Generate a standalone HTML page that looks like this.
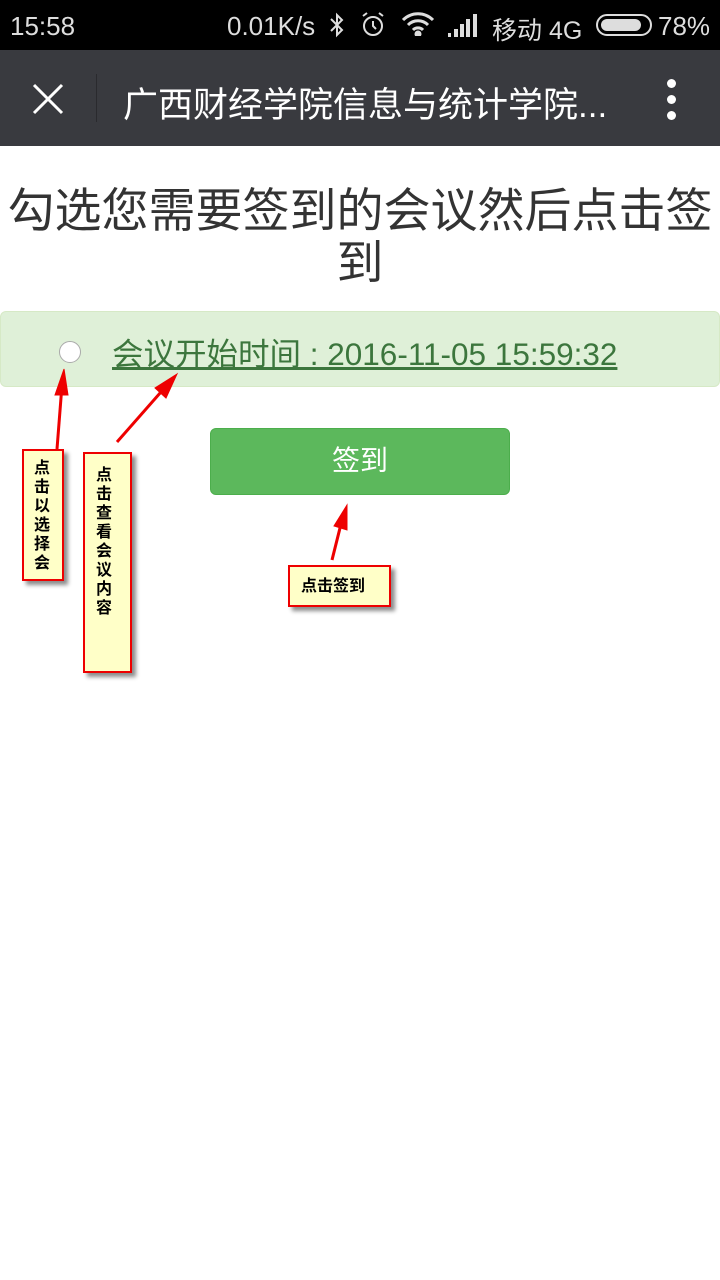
<!DOCTYPE html>
<html><head><meta charset="utf-8"><style>
*{margin:0;padding:0;box-sizing:border-box}
body{width:720px;height:1280px;background:#fff;position:relative;overflow:hidden;font-family:"Liberation Sans","Noto Sans CJK SC",sans-serif}
.sb{position:absolute;left:0;top:0;width:720px;height:50px;background:#000;color:#ddd;font-size:26px}
.tb{position:absolute;left:0;top:50px;width:720px;height:96px;background:#393a3f;color:#fff}
.h{position:absolute;left:0;top:185px;width:720px;text-align:center;font-size:47px;line-height:52px;color:#333;white-space:nowrap}
.panel{position:absolute;left:0;top:311px;width:720px;height:76px;background:#dff0d8;border:1px solid #d6e9c6;border-radius:6px}
.radio{position:absolute;left:59px;top:341px;width:22px;height:22px;border-radius:50%;background:#fff;border:1px solid #aaa}
.link{position:absolute;left:112px;top:329px;font-size:31.5px;color:#3c763d;text-decoration:underline;white-space:nowrap}
.btn{position:absolute;left:210px;top:428px;width:300px;height:67px;background:#5cb85c;border:1px solid #4cae4c;border-radius:6px;color:#fff;font-size:28px;text-align:center;line-height:64px}
.note{position:absolute;background:#ffffc8;border:2px solid #e00;box-shadow:4px 4px 4px rgba(0,0,0,.45);font-size:16px;line-height:19px;font-weight:bold;color:#000;font-family:"Noto Sans CJK SC",sans-serif}
</style></head><body>
<div class="sb">
<span style="position:absolute;left:10px;top:11px">15:58</span>
<span style="position:absolute;left:227px;top:11px">0.01K/s</span>
<svg style="position:absolute;left:328px;top:12px" width="18" height="26" viewBox="0 0 18 26" fill="none" stroke="#ddd" stroke-width="2"><path d="M3 7l11 11-5 5V3l5 5L3 19"/></svg>
<svg style="position:absolute;left:360px;top:10px" width="26" height="28" viewBox="0 0 26 28" fill="none" stroke="#ddd" stroke-width="2"><circle cx="13" cy="16" r="9"/><path d="M13 11v5l3 3M3 6l4-3M23 6l-4-3"/></svg>
<svg style="position:absolute;left:401px;top:12px" width="34" height="24" viewBox="0 0 34 24" fill="none" stroke="#ddd" stroke-width="3"><path d="M2 8a21 21 0 0 1 30 0M7 13a14 14 0 0 1 20 0M12 18a7 7 0 0 1 10 0"/><circle cx="17" cy="22" r="2" fill="#ddd"/></svg>
<svg style="position:absolute;left:448px;top:13px" width="32" height="24" viewBox="0 0 32 24" fill="#ddd"><rect x="0" y="20" width="3" height="4"/><rect x="6" y="16" width="4" height="8"/><rect x="12" y="11" width="4" height="13"/><rect x="18" y="6" width="4" height="18"/><rect x="25" y="1" width="4" height="23"/></svg>
<span style="position:absolute;left:492px;top:11px;font-size:25px">移动 4G</span>
<svg style="position:absolute;left:596px;top:14px" width="58" height="22" viewBox="0 0 58 22"><rect x="1" y="1" width="54" height="20" rx="10" fill="none" stroke="#ddd" stroke-width="2"/><rect x="5" y="5" width="40" height="12" rx="6" fill="#ddd"/></svg>
<span style="position:absolute;left:658px;top:11px">78%</span>
</div>
<div class="tb">
<svg style="position:absolute;left:32px;top:33px" width="32" height="32" viewBox="0 0 32 32" stroke="#fff" stroke-width="3"><path d="M2 2l28 28M30 2L2 30"/></svg>
<div style="position:absolute;left:96px;top:24px;width:1px;height:48px;background:#2a2a2e"></div>
<span style="position:absolute;left:123px;top:27px;font-size:35px;white-space:nowrap">广西财经学院信息与统计学院...</span>
<div style="position:absolute;left:667px;top:29px;width:9px;height:9px;border-radius:50%;background:#fff"></div>
<div style="position:absolute;left:667px;top:45px;width:9px;height:9px;border-radius:50%;background:#fff"></div>
<div style="position:absolute;left:667px;top:61px;width:9px;height:9px;border-radius:50%;background:#fff"></div>
</div>
<div class="h">勾选您需要签到的会议然后点击签<br>到</div>
<div class="panel"></div>
<div class="radio"></div>
<div class="link">会议开始时间 : 2016-11-05 15:59:32</div>
<div class="btn">签到</div>
<div class="note" style="left:22px;top:449px;width:42px;height:132px;padding:6px 0 0 10px">点<br>击<br>以<br>选<br>择<br>会</div>
<div class="note" style="left:83px;top:452px;width:49px;height:221px;padding:10px 0 0 11px">点<br>击<br>查<br>看<br>会<br>议<br>内<br>容</div>
<div class="note" style="left:288px;top:565px;width:103px;height:42px;padding:8px 0 0 11px">点击签到</div>
<svg style="position:absolute;left:0;top:0" width="720" height="700" viewBox="0 0 720 700">
<g stroke="#e00" stroke-width="3" fill="#e00">
<line x1="57" y1="449" x2="62" y2="385"/><polygon points="64,369 55,395 68,395" stroke-width="1"/>
<line x1="117" y1="442" x2="168" y2="384"/><polygon points="177,374 155,388 166,398" stroke-width="1"/>
<line x1="332" y1="560" x2="342" y2="520"/><polygon points="347,505 334,526 347,530" stroke-width="1"/>
</g></svg>
</body></html>
